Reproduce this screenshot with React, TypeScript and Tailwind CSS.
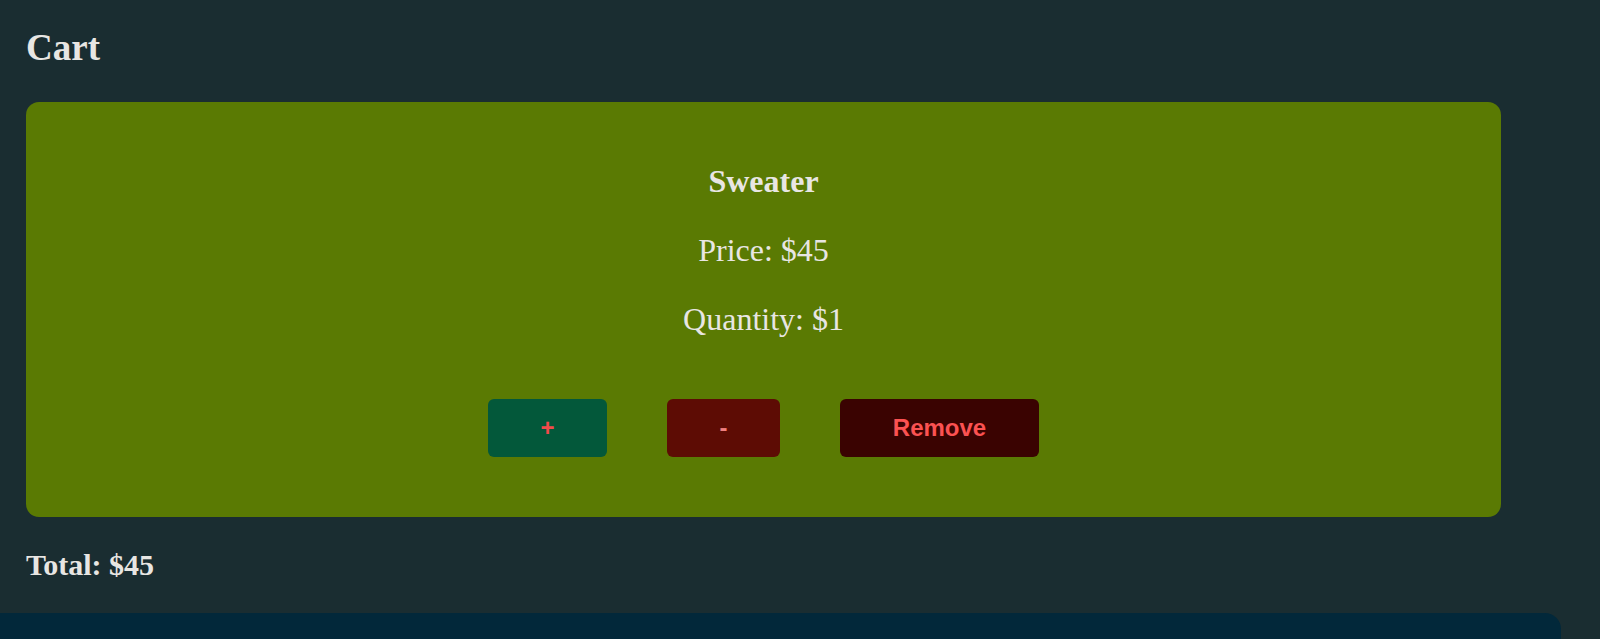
import React, { useState } from "react";

const serif = "font-['Liberation_Serif',_'Times_New_Roman',_serif]";
const sans = "font-['Liberation_Sans',_Arial,_sans-serif]";

const App = () => {
  const [qty, setQty] = useState(1);
  const price = 45;

  return (
    <div className={`h-screen bg-[#1a2d31] text-[#e8e6e3] ${serif} overflow-hidden`}>
      <div className="pl-[26px] pt-[26px]">
        <h1 className="text-[37px] leading-[44px] font-bold">Cart</h1>

        <div className="mt-[32px] w-[1475px] rounded-[13px] bg-[#5a7a03] pt-[61px] pb-[60px] flex flex-col items-center text-[32px] leading-[36px]">
          <h2 className="font-bold">Sweater</h2>
          <p className="mt-[33px]">Price: ${price}</p>
          <p className="mt-[33px]">Quantity: ${qty}</p>

          <div className={`mt-[62px] flex gap-[60px] ${sans} text-[24px] font-bold`}>
            <button
              onClick={() => setQty(qty + 1)}
              className="h-[58px] w-[119px] rounded-[6px] bg-[#03583a] text-[#f24a4a]"
            >
              +
            </button>
            <button
              onClick={() => setQty(Math.max(1, qty - 1))}
              className="h-[58px] w-[113px] rounded-[6px] bg-[#5d0c04] text-[#f08080]"
            >
              -
            </button>
            <button className="h-[58px] w-[199px] rounded-[6px] bg-[#3a0301] text-[#fb5252]">
              Remove
            </button>
          </div>
        </div>

        <p className="mt-[30px] text-[30px] leading-[36px] font-bold">Total: ${price * qty}</p>
      </div>

      <div className="mt-[30px] h-[26px] w-[1561px] rounded-tr-2xl bg-[#02283a]" />
    </div>
  );
};

export default App;
